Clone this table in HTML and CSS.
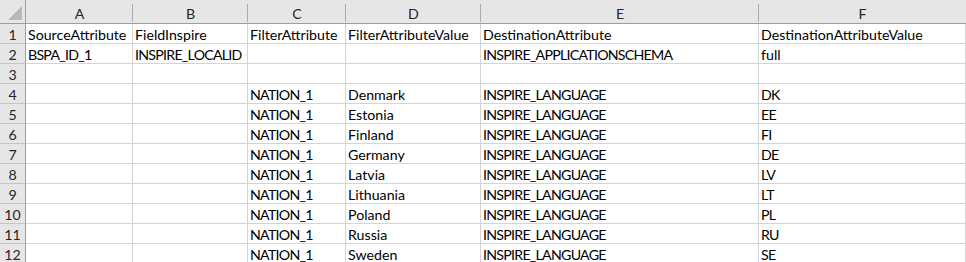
FILE: index.html
```html
<!DOCTYPE html>
<html>
<head>
<meta charset="utf-8">
<link rel="stylesheet" href="styles.css">
</head>
<body>
<div class="sheet">
  <div class="corner"><span class="tri"></span></div>
  <div class="colhead">A</div>
  <div class="colhead">B</div>
  <div class="colhead">C</div>
  <div class="colhead">D</div>
  <div class="colhead">E</div>
  <div class="colhead last">F</div>

  <div class="rowhead">1</div>
  <div class="cell">SourceAttribute</div>
  <div class="cell">FieldInspire</div>
  <div class="cell">FilterAttribute</div>
  <div class="cell">FilterAttributeValue</div>
  <div class="cell">DestinationAttribute</div>
  <div class="cell">DestinationAttributeValue</div>

  <div class="rowhead">2</div>
  <div class="cell caps">BSPA_ID_1</div>
  <div class="cell caps">INSPIRE_LOCALID</div>
  <div class="cell"></div>
  <div class="cell"></div>
  <div class="cell caps">INSPIRE_APPLICATIONSCHEMA</div>
  <div class="cell">full</div>

  <div class="rowhead">3</div>
  <div class="cell"></div>
  <div class="cell"></div>
  <div class="cell"></div>
  <div class="cell"></div>
  <div class="cell"></div>
  <div class="cell"></div>

  <div class="rowhead">4</div>
  <div class="cell"></div>
  <div class="cell"></div>
  <div class="cell caps">NATION_1</div>
  <div class="cell">Denmark</div>
  <div class="cell caps">INSPIRE_LANGUAGE</div>
  <div class="cell caps">DK</div>

  <div class="rowhead">5</div>
  <div class="cell"></div>
  <div class="cell"></div>
  <div class="cell caps">NATION_1</div>
  <div class="cell">Estonia</div>
  <div class="cell caps">INSPIRE_LANGUAGE</div>
  <div class="cell caps">EE</div>

  <div class="rowhead">6</div>
  <div class="cell"></div>
  <div class="cell"></div>
  <div class="cell caps">NATION_1</div>
  <div class="cell">Finland</div>
  <div class="cell caps">INSPIRE_LANGUAGE</div>
  <div class="cell caps">FI</div>

  <div class="rowhead">7</div>
  <div class="cell"></div>
  <div class="cell"></div>
  <div class="cell caps">NATION_1</div>
  <div class="cell">Germany</div>
  <div class="cell caps">INSPIRE_LANGUAGE</div>
  <div class="cell caps">DE</div>

  <div class="rowhead">8</div>
  <div class="cell"></div>
  <div class="cell"></div>
  <div class="cell caps">NATION_1</div>
  <div class="cell">Latvia</div>
  <div class="cell caps">INSPIRE_LANGUAGE</div>
  <div class="cell caps">LV</div>

  <div class="rowhead">9</div>
  <div class="cell"></div>
  <div class="cell"></div>
  <div class="cell caps">NATION_1</div>
  <div class="cell">Lithuania</div>
  <div class="cell caps">INSPIRE_LANGUAGE</div>
  <div class="cell caps">LT</div>

  <div class="rowhead">10</div>
  <div class="cell"></div>
  <div class="cell"></div>
  <div class="cell caps">NATION_1</div>
  <div class="cell">Poland</div>
  <div class="cell caps">INSPIRE_LANGUAGE</div>
  <div class="cell caps">PL</div>

  <div class="rowhead">11</div>
  <div class="cell"></div>
  <div class="cell"></div>
  <div class="cell caps">NATION_1</div>
  <div class="cell">Russia</div>
  <div class="cell caps">INSPIRE_LANGUAGE</div>
  <div class="cell caps">RU</div>

  <div class="rowhead">12</div>
  <div class="cell"></div>
  <div class="cell"></div>
  <div class="cell caps">NATION_1</div>
  <div class="cell">Sweden</div>
  <div class="cell caps">INSPIRE_LANGUAGE</div>
  <div class="cell caps">SE</div>
</div>
</body>
</html>
```

FILE: styles.css
```css
html, body {
  margin: 0;
  padding: 0;
  background: #ffffff;
  overflow: hidden;
}

.sheet {
  display: grid;
  grid-template-columns: 26px 107px 115px 98px 135px 278px 1fr;
  grid-auto-rows: 20px;
  grid-template-rows: 24px;
  width: 966px;
  font-family: Lato, "Liberation Sans", Arial, sans-serif;
  font-size: 14.2px;
  color: #000000;
}

.corner {
  position: relative;
  background: #e6e6e6;
  border-right: 1px solid #9e9e9e;
  border-bottom: 1px solid #9e9e9e;
}

.tri {
  position: absolute;
  right: 3px;
  bottom: 3px;
  width: 0;
  height: 0;
  border-left: 14px solid transparent;
  border-bottom: 14px solid #b9b9b9;
}

.colhead {
  background: #e6e6e6;
  border-bottom: 1px solid #9e9e9e;
  display: flex;
  align-items: flex-end;
  justify-content: center;
  padding-top: 4px;
  background-image: linear-gradient(#ababab, #ababab);
  background-size: 1px calc(100% - 5px);
  background-position: right 4px;
  background-repeat: no-repeat;
  color: #262626;
  line-height: 19px;
}

.colhead.last {
  background-image: none;
}

.rowhead {
  background: #e6e6e6;
  border-right: 1px solid #9e9e9e;
  border-bottom: 1px solid #c4c4c4;
  text-align: center;
  color: #262626;
  line-height: 21px;
}

.cell {
  border-right: 1px solid #d4d4d4;
  border-bottom: 1px solid #d4d4d4;
  padding-left: 2px;
  line-height: 21px;
  white-space: nowrap;
}

.cell.caps {
  letter-spacing: -0.75px;
}
```
